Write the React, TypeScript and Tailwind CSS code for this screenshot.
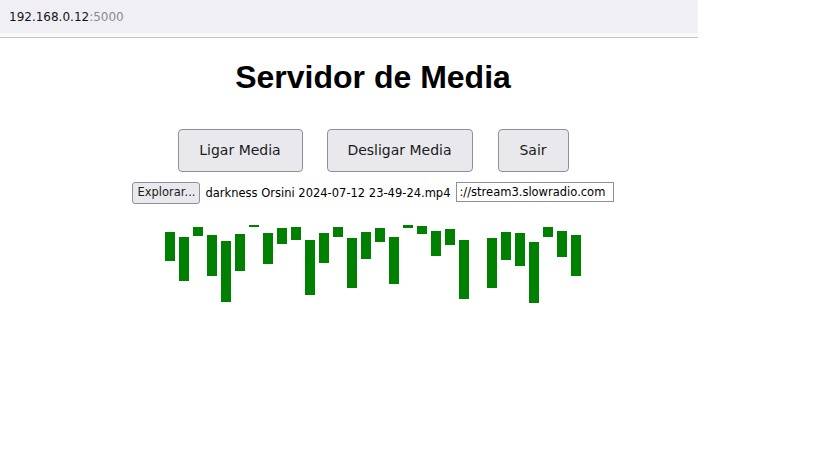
import React from 'react';

// [offset from top, height] of each level bar, in px
const levels: [number, number][] = [
  [7, 29], [12, 44], [2, 9], [10, 41], [16, 61], [9, 37], [0, 2], [8, 31], [3, 16], [2, 13],
  [15, 55], [8, 30], [2, 10], [13, 50], [7, 27], [3, 14], [12, 47], [0, 3], [1, 8], [6, 25],
  [4, 16], [15, 59], [0, 0], [13, 50], [7, 28], [8, 33], [17, 61], [2, 10], [6, 26], [10, 41],
];

const sysFont = "font-['DejaVu_Sans',sans-serif]";

function BigButton({ label, width }: { label: string; width: string }) {
  return (
    <button
      type="button"
      className={`${width} h-[43px] rounded-[4px] border border-[#8f8f9d] bg-[#e9e9ed] text-[14px] text-[#1b1b1b] ${sysFont}`}
    >
      {label}
    </button>
  );
}

export default function App() {
  return (
    <div className="w-[819px] h-[460px] bg-white overflow-hidden">
      {/* address bar */}
      <div className="w-[698px]">
        <div className={`h-[33px] bg-[#f0f0f4] flex items-center pl-[9px] text-[12px] ${sysFont}`}>
          <span className="text-[#15141a]">192.168.0.12</span>
          <span className="text-[#8a8a8e]">:5000</span>
        </div>
        <div className="h-[5px] bg-[#f9f9fb] border-b border-[#c4c4c8]" />
      </div>

      <main className="w-[746px] flex flex-col items-center">
        <h1 className="mt-[21px] text-[32px] leading-[37px] font-bold text-black font-['Liberation_Sans',Arial,sans-serif]">
          Servidor de Media
        </h1>

        <div className="mt-[33px] flex gap-6">
          <BigButton label="Ligar Media" width="w-[125px]" />
          <BigButton label="Desligar Media" width="w-[146px]" />
          <div className="ml-px">
            <BigButton label="Sair" width="w-[71px]" />
          </div>
        </div>

        <div className={`mt-[10px] flex items-start text-[11.5px] text-black ${sysFont}`}>
          <button
            type="button"
            className="w-[68px] h-[22px] rounded-[3px] border border-[#8f8f9d] bg-[#e9e9ed] text-[#1b1b1b]"
          >
            Explorar...
          </button>
          <span className="ml-[5px] leading-[22px]">darkness Orsini 2024-07-12 23-49-24.mp4</span>
          <input
            type="text"
            readOnly
            value="://stream3.slowradio.com"
            className="ml-[5px] w-[158px] h-[20px] border border-[#8f8f9d] px-[3px] text-[11.5px] text-black outline-none"
          />
        </div>

        <div className="mt-[21px] flex items-start gap-1 h-[80px]">
          {levels.map(([top, h], i) => (
            <div key={i} className="w-[10px] bg-[#008000]" style={{ marginTop: top, height: h }} />
          ))}
        </div>
      </main>
    </div>
  );
}
